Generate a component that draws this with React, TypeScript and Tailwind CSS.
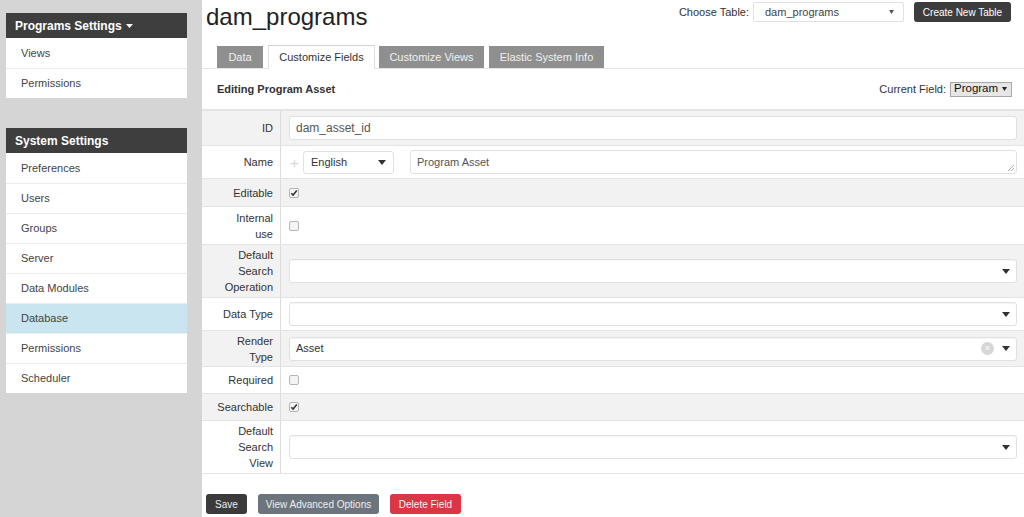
import React from 'react';

const Caret = ({ className = '' }: { className?: string }) => (
  <svg width="8" height="5" viewBox="0 0 8 5" className={className}>
    <path d="M0 0h8L4 5z" fill="#333" />
  </svg>
);

const Check = ({ checked }: { checked?: boolean }) => (
  <span className="flex h-[10px] w-[10px] items-center justify-center rounded-[2px] border border-[#b5b5b5] bg-[#f4f4f4]">
    {checked && (
      <svg width="8" height="8" viewBox="0 0 8 8">
        <path d="M1.3 4.2l1.8 1.9L6.8 1.6" stroke="#333" strokeWidth="1.5" fill="none" />
      </svg>
    )}
  </span>
);

const SelectBox = ({ value, clear }: { value?: string; clear?: boolean }) => (
  <div className="flex h-[24px] w-full items-center rounded-[3px] border border-[#e1e1e1] bg-white pl-[6px] pr-[6px] shadow-[inset_0_1px_1px_rgba(0,0,0,0.04)]">
    <span className="flex-1 text-[11px] text-[#333]">{value}</span>
    {clear && (
      <span className="mr-[8px] flex h-[13px] w-[13px] items-center justify-center rounded-full bg-[#d6d6d6] text-[9px] leading-none text-white">×</span>
    )}
    <Caret />
  </div>
);

type Row = { label: React.ReactNode; h: string; gray: boolean; body: React.ReactNode };

const SidebarPanel = ({ title, items, active, caret }: { title: string; items: string[]; active?: string; caret?: boolean }) => (
  <div className="w-[181px] bg-white">
    <div className="flex h-[25px] items-center bg-[#3e3e3e] px-[9px] text-[12px] font-bold text-white">
      {title}
      {caret && (
        <svg width="7" height="4" viewBox="0 0 7 4" className="ml-[4px] mt-[1px]">
          <path d="M0 0h7L3.5 4z" fill="#fff" />
        </svg>
      )}
    </div>
    {items.map((it, i) => (
      <div
        key={i}
        className={`flex h-[30px] items-center px-[15px] text-[11px] text-[#444] ${i > 0 ? 'border-t border-[#ececec]' : ''} ${it === active ? 'bg-[#c9e6f0]' : ''}`}
      >
        {it}
      </div>
    ))}
  </div>
);

export default function App() {
  const rows: Row[] = [
    {
      label: 'ID',
      h: 'h-[34px]',
      gray: true,
      body: (
        <div className="flex h-[24px] w-full items-center rounded-[3px] border border-[#e1e1e1] bg-white px-[6px] text-[12px] text-[#555]">
          dam_asset_id
        </div>
      ),
    },
    {
      label: 'Name',
      h: 'h-[33px]',
      gray: false,
      body: (
        <div className="flex w-full items-center">
          <span className="w-[14px] pl-[1px] text-[15px] font-light leading-none text-[#d8d8d8]">+</span>
          <div className="flex h-[23px] w-[91px] items-center justify-between rounded-[3px] border border-[#e1e1e1] bg-white pl-[7px] pr-[7px] text-[11px] text-[#333]">
            English
            <Caret />
          </div>
          <div className="relative ml-[16px] flex h-[24px] flex-1 items-center rounded-[3px] border border-[#e1e1e1] bg-white px-[6px] text-[11px] text-[#555]">
            Program Asset
            <svg width="6" height="6" viewBox="0 0 6 6" className="absolute bottom-[2px] right-[2px]">
              <path d="M6 0L0 6M6 3L3 6" stroke="#999" strokeWidth="0.8" />
            </svg>
          </div>
        </div>
      ),
    },
    { label: 'Editable', h: 'h-[28px]', gray: true, body: <Check checked /> },
    { label: <>Internal<br />use</>, h: 'h-[38px]', gray: false, body: <Check /> },
    { label: <>Default<br />Search<br />Operation</>, h: 'h-[53px]', gray: true, body: <SelectBox /> },
    { label: 'Data Type', h: 'h-[33px]', gray: false, body: <SelectBox /> },
    { label: <>Render<br />Type</>, h: 'h-[36px]', gray: true, body: <SelectBox value="Asset" clear /> },
    { label: 'Required', h: 'h-[27px]', gray: false, body: <Check /> },
    { label: 'Searchable', h: 'h-[27px]', gray: true, body: <Check checked /> },
    { label: <>Default<br />Search<br />View</>, h: 'h-[53px]', gray: false, body: <SelectBox /> },
  ];

  return (
    <div className="flex min-h-[517px] w-[1024px] bg-[#d5d5d5] font-['Liberation_Sans',Arial,sans-serif]">
      <aside className="flex w-[202px] shrink-0 flex-col gap-[30px] pl-[6px] pt-[13px]">
        <SidebarPanel title="Programs Settings" caret items={['Views', 'Permissions']} />
        <SidebarPanel
          title="System Settings"
          active="Database"
          items={['Preferences', 'Users', 'Groups', 'Server', 'Data Modules', 'Database', 'Permissions', 'Scheduler']}
        />
      </aside>

      <main className="flex-1 bg-white">
        <div className="flex h-[46px] items-start justify-between">
          <h1 className="pl-[4px] pt-[2px] text-[24px] leading-[30px] text-[#222]">dam_programs</h1>
          <div className="flex items-center pr-[13px] pt-[2px]">
            <span className="mr-[4px] text-[11px] text-[#333]">Choose Table:</span>
            <div className="flex h-[20px] w-[151px] items-center justify-between rounded-[2px] border border-[#e2e2e2] bg-white pl-[11px] pr-[9px] text-[11px] text-[#444]">
              dam_programs
              <svg width="5" height="4" viewBox="0 0 5 4">
                <path d="M0 0h5L2.5 4z" fill="#555" />
              </svg>
            </div>
            <button className="ml-[10px] h-[20px] w-[97px] rounded-[3px] bg-[#3d3d3d] text-[10px] text-white">Create New Table</button>
          </div>
        </div>

        <div className="flex h-[23px] items-end gap-[4px] border-b border-[#e6e6e6] pl-[15px]">
          <div className="flex h-[22px] w-[46px] items-center justify-center bg-[#8f8f8f] text-[11px] text-[#f0f0f0]">Data</div>
          <div className="mb-[-1px] ml-[1px] flex h-[24px] w-[107px] items-center justify-center border border-b-0 border-[#e0e0e0] border-t-[#d0d0d0] bg-white text-[11px] text-[#333]">Customize Fields</div>
          <div className="flex h-[22px] w-[105px] items-center justify-center bg-[#8f8f8f] text-[11px] text-[#f0f0f0]">Customize Views</div>
          <div className="ml-[1px] flex h-[22px] w-[115px] items-center justify-center bg-[#8f8f8f] text-[11px] text-[#f0f0f0]">Elastic System Info</div>
        </div>

        <div className="flex h-[42px] items-center justify-between border-b-2 border-[#e4e4e4] pl-[15px] pr-[12px]">
          <span className="text-[11px] font-bold text-[#333]">Editing Program Asset</span>
          <div className="flex items-center text-[11px] text-[#333]">
            Current Field:
            <div className="ml-[4px] flex h-[15px] w-[62px] items-center justify-between border border-[#a8a8a8] bg-[#e6e6e6] pl-[3px] pr-[4px] text-[11.5px] text-[#111]">
              Program
              <svg width="5" height="4" viewBox="0 0 5 4">
                <path d="M0 0h5L2.5 4z" fill="#222" />
              </svg>
            </div>
          </div>
        </div>

        <div className="border-b border-[#e6e6e6]">
          {rows.map((r, i) => (
            <div key={i} className={`flex ${r.h} ${i > 0 ? 'border-t border-[#e4e4e4]' : ''} ${r.gray ? 'bg-[#f2f2f2]' : 'bg-white'}`}>
              <div className="flex w-[79px] shrink-0 items-center justify-end border-r border-[#dcdcdc] pr-[7px] text-right text-[11px] leading-[16px] text-[#333]">
                <span>{r.label}</span>
              </div>
              <div className="flex flex-1 items-center pl-[8px] pr-[7px]">{r.body}</div>
            </div>
          ))}
        </div>

        <div className="flex gap-[11px] pl-[4px] pt-[20px]">
          <button className="h-[20px] w-[41px] rounded-[3px] bg-[#3b3b3b] text-[10px] text-[#eee]">Save</button>
          <button className="h-[20px] w-[121px] rounded-[3px] bg-[#6c757d] text-[10px] text-[#eee]">View Advanced Options</button>
          <button className="h-[20px] w-[71px] rounded-[3px] bg-[#dc3545] text-[10px] text-[#f5f5f5]">Delete Field</button>
        </div>
      </main>
    </div>
  );
}
